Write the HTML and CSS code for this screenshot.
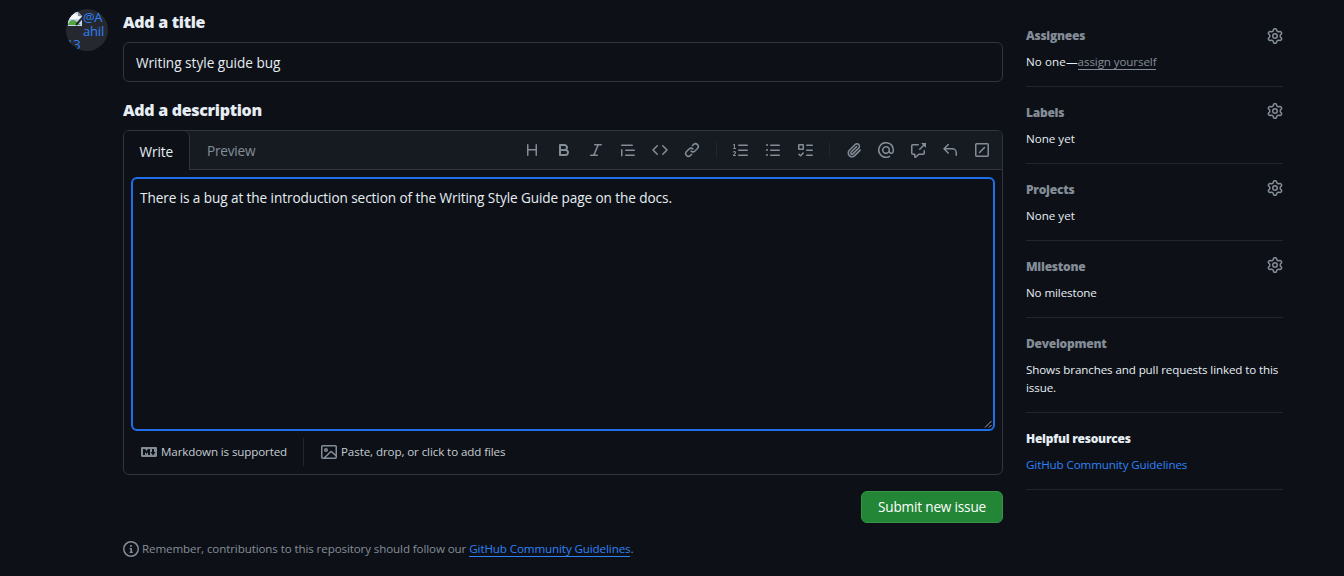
FILE: index.html
```html
<!DOCTYPE html>
<html lang="en">
<head>
<meta charset="utf-8">
<title>New issue</title>
<link rel="stylesheet" href="styles.css">
</head>
<body>
<svg class="defs" width="0" height="0">
  <symbol id="gear" viewBox="0 0 16 16"><path d="M8 0a8.2 8.2 0 0 1 .701.031C9.444.095 9.99.645 10.16 1.29l.288 1.107c.018.066.079.158.212.224.231.114.454.243.668.386.123.082.233.09.299.071l1.103-.303c.644-.176 1.392.021 1.82.63.27.385.506.792.704 1.218.315.675.111 1.422-.364 1.891l-.814.806c-.049.048-.098.147-.088.294.016.257.016.515 0 .772-.01.147.038.246.088.294l.814.806c.475.469.679 1.216.364 1.891a7.977 7.977 0 0 1-.704 1.217c-.428.61-1.176.807-1.82.63l-1.102-.302c-.067-.019-.177-.011-.3.071a5.909 5.909 0 0 1-.668.386c-.133.066-.194.158-.211.224l-.29 1.106c-.168.646-.715 1.196-1.458 1.26a8.006 8.006 0 0 1-1.402 0c-.743-.064-1.289-.614-1.458-1.26l-.289-1.106c-.018-.066-.079-.158-.212-.224a5.738 5.738 0 0 1-.668-.386c-.123-.082-.233-.09-.299-.071l-1.103.303c-.644.176-1.392-.021-1.82-.63a8.12 8.12 0 0 1-.704-1.218c-.315-.675-.111-1.422.363-1.891l.815-.806c.05-.048.098-.147.088-.294a6.214 6.214 0 0 1 0-.772c.01-.147-.038-.246-.088-.294l-.815-.806C.635 6.045.431 5.298.746 4.623a7.92 7.92 0 0 1 .704-1.217c.428-.61 1.176-.807 1.82-.63l1.102.302c.067.019.177.011.3-.071.214-.143.437-.272.668-.386.133-.066.194-.158.211-.224l.29-1.106C6.009.645 6.556.095 7.299.03 7.53.01 7.764 0 8 0Zm-.571 1.525c-.036.003-.108.036-.137.146l-.289 1.105c-.147.561-.549.967-.998 1.189-.173.086-.34.183-.5.29-.417.278-.97.423-1.529.27l-1.103-.303c-.109-.03-.175.016-.195.045-.22.312-.412.644-.573.99-.014.031-.021.11.059.19l.815.806c.411.406.562.957.53 1.456a4.709 4.709 0 0 0 0 .582c.032.499-.119 1.05-.53 1.456l-.815.806c-.081.08-.073.159-.059.19.162.346.353.677.573.989.02.03.085.076.195.046l1.102-.303c.56-.153 1.113-.008 1.53.27.161.107.328.204.501.29.447.222.85.629.997 1.189l.289 1.105c.029.109.101.143.137.146a6.6 6.6 0 0 0 1.142 0c.036-.003.108-.036.137-.146l.289-1.105c.147-.561.549-.967.998-1.189.173-.086.34-.183.5-.29.417-.278.97-.423 1.529-.27l1.103.303c.109.029.175-.016.195-.045.22-.313.411-.644.573-.99.014-.031.021-.11-.059-.19l-.815-.806c-.411-.406-.562-.957-.53-1.456a4.709 4.709 0 0 0 0-.582c-.032-.499.119-1.05.53-1.456l.815-.806c.081-.08.073-.159.059-.19a6.464 6.464 0 0 0-.573-.989c-.02-.03-.085-.076-.195-.046l-1.102.303c-.56.153-1.113.008-1.53-.27a4.44 4.44 0 0 0-.501-.29c-.447-.222-.85-.629-.997-1.189l-.289-1.105c-.029-.11-.101-.143-.137-.146a6.6 6.6 0 0 0-1.142 0ZM11 8a3 3 0 1 1-6 0 3 3 0 0 1 6 0ZM9.5 8a1.5 1.5 0 1 0-3.001.001A1.5 1.5 0 0 0 9.5 8Z"/></symbol>
</svg>
<div class="page">
  <div class="avatar">
    <svg class="broken" width="16" height="16" viewBox="0 0 16 16"><path fill="#c5d5f5" d="M1 1h10l4 4v10H1z"/><path fill="#f4f6fa" d="M2 7c0-3 2-3 3-3 1-2 5-2 6 1l3 1v2H2z"/><path fill="#52a83c" d="M1 14c1-5 5-6 8-4l5 4z"/><path fill="#8b9096" d="M11 1v4h4z"/><path stroke="#25292f" stroke-width="2" d="m16 6-7 8"/></svg><span class="alt">@A</span><span class="alt alt2">ahil</span><span class="alt alt3">13</span>
  </div>

  <main class="main">
    <h3 class="heading h-title">Add a title</h3>
    <div class="title-input"><span class="t-title">Writing style guide bug</span></div>
    <h3 class="heading heading-desc">Add a description</h3>

    <section class="editor">
      <header class="editor-head">
        <div class="tab tab-active"><span>Write</span></div>
        <div class="tab tab-preview"><span>Preview</span></div>
        <div class="tools">
          <svg class="icon" viewBox="0 0 16 16"><path d="M3.75 2a.75.75 0 0 1 .75.75V7h7V2.75a.75.75 0 0 1 1.5 0v10.5a.75.75 0 0 1-1.5 0V8.5h-7v4.75a.75.75 0 0 1-1.5 0V2.75A.75.75 0 0 1 3.75 2Z"/></svg>
          <svg class="icon" viewBox="0 0 16 16"><path d="M4 2h4.5a3.501 3.501 0 0 1 2.852 5.53A3.499 3.499 0 0 1 9.5 14H4a1 1 0 0 1-1-1V3a1 1 0 0 1 1-1Zm1 7v3h4.5a1.5 1.5 0 0 0 0-3Zm3.5-2a1.5 1.5 0 0 0 0-3H5v3Z"/></svg>
          <svg class="icon" viewBox="0 0 16 16"><path d="M6 2.75A.75.75 0 0 1 6.75 2h6.5a.75.75 0 0 1 0 1.5h-2.505l-3.858 9H9.25a.75.75 0 0 1 0 1.5h-6.5a.75.75 0 0 1 0-1.5h2.505l3.858-9H6.75A.75.75 0 0 1 6 2.75Z"/></svg>
          <svg class="icon" viewBox="0 0 16 16"><path d="M1.75 2.5h10.5a.75.75 0 0 1 0 1.5H1.75a.75.75 0 0 1 0-1.5Zm4 5h8.5a.75.75 0 0 1 0 1.5h-8.5a.75.75 0 0 1 0-1.5Zm0 5h8.5a.75.75 0 0 1 0 1.5h-8.5a.75.75 0 0 1 0-1.5ZM2.5 7.75v6a.75.75 0 0 1-1.5 0v-6a.75.75 0 0 1 1.5 0Z"/></svg>
          <svg class="icon" viewBox="0 0 16 16"><path d="m11.28 3.22 4.25 4.25a.75.75 0 0 1 0 1.06l-4.25 4.25a.749.749 0 0 1-1.275-.326.749.749 0 0 1 .215-.734L13.94 8l-3.72-3.72a.749.749 0 0 1 .326-1.275.749.749 0 0 1 .734.215Zm-6.56 0a.751.751 0 0 1 1.042.018.751.751 0 0 1 .018 1.042L2.06 8l3.72 3.72a.749.749 0 0 1-.326 1.275.749.749 0 0 1-.734-.215L.47 8.53a.75.75 0 0 1 0-1.06Z"/></svg>
          <svg class="icon" viewBox="0 0 16 16"><path d="m7.775 3.275 1.25-1.25a3.5 3.5 0 1 1 4.95 4.95l-2.5 2.5a3.5 3.5 0 0 1-4.95 0 .751.751 0 0 1 .018-1.042.751.751 0 0 1 1.042-.018 1.998 1.998 0 0 0 2.83 0l2.5-2.5a2.002 2.002 0 0 0-2.83-2.83l-1.25 1.25a.751.751 0 0 1-1.042-.018.751.751 0 0 1-.018-1.042Zm-4.69 9.64a1.998 1.998 0 0 0 2.83 0l1.25-1.25a.751.751 0 0 1 1.042.018.751.751 0 0 1 .018 1.042l-1.25 1.25a3.5 3.5 0 1 1-4.95-4.95l2.5-2.5a3.5 3.5 0 0 1 4.95 0 .751.751 0 0 1-.018 1.042.751.751 0 0 1-1.042.018 1.998 1.998 0 0 0-2.83 0l-2.5 2.5a1.998 1.998 0 0 0 0 2.83Z"/></svg>
          <i class="tool-sep"></i>
          <svg class="icon" viewBox="0 0 16 16"><path d="M5 3.25a.75.75 0 0 1 .75-.75h8.5a.75.75 0 0 1 0 1.5h-8.5A.75.75 0 0 1 5 3.25Zm0 5a.75.75 0 0 1 .75-.75h8.5a.75.75 0 0 1 0 1.5h-8.5A.75.75 0 0 1 5 8.25Zm0 5a.75.75 0 0 1 .75-.75h8.5a.75.75 0 0 1 0 1.5h-8.5a.75.75 0 0 1-.75-.75ZM.924 10.32a.5.5 0 0 1-.851-.525l.001-.001.001-.002.002-.004.007-.011c.097-.144.215-.273.348-.384.228-.19.588-.392 1.068-.392.468 0 .858.181 1.126.484.259.294.377.673.377 1.038 0 .987-.686 1.495-1.156 1.845l-.047.035c-.303.225-.522.4-.654.597h1.357a.5.5 0 0 1 0 1H.5a.5.5 0 0 1-.5-.5c0-1.005.692-1.52 1.167-1.875l.035-.025c.531-.396.8-.625.8-1.078a.57.57 0 0 0-.128-.376C1.806 10.068 1.695 10 1.5 10a.658.658 0 0 0-.429.163.835.835 0 0 0-.144.153ZM2.003 2.5V6h.503a.5.5 0 0 1 0 1H.5a.5.5 0 0 1 0-1h.503V3.308l-.28.14a.5.5 0 0 1-.446-.895l1.003-.5a.5.5 0 0 1 .723.447Z"/></svg>
          <svg class="icon" viewBox="0 0 16 16"><path d="M5.75 2.5h8.5a.75.75 0 0 1 0 1.5h-8.5a.75.75 0 0 1 0-1.5Zm0 5h8.5a.75.75 0 0 1 0 1.5h-8.5a.75.75 0 0 1 0-1.5Zm0 5h8.5a.75.75 0 0 1 0 1.5h-8.5a.75.75 0 0 1 0-1.5ZM2 14a1 1 0 1 1 0-2 1 1 0 0 1 0 2Zm1-6a1 1 0 1 1-2 0 1 1 0 0 1 2 0ZM2 4a1 1 0 1 1 0-2 1 1 0 0 1 0 2Z"/></svg>
          <svg class="icon" viewBox="0 0 16 16"><path d="M2 2h4a1 1 0 0 1 1 1v4a1 1 0 0 1-1 1H2a1 1 0 0 1-1-1V3a1 1 0 0 1 1-1Zm4.655 8.595a.75.75 0 0 1 0 1.06L4.03 14.28a.75.75 0 0 1-1.06 0l-1.5-1.5a.749.749 0 0 1 .326-1.275.749.749 0 0 1 .734.215l.97.97 2.095-2.095a.75.75 0 0 1 1.06 0ZM9.75 2.5h5.5a.75.75 0 0 1 0 1.5h-5.5a.75.75 0 0 1 0-1.5Zm0 5h5.5a.75.75 0 0 1 0 1.5h-5.5a.75.75 0 0 1 0-1.5Zm0 5h5.5a.75.75 0 0 1 0 1.5h-5.5a.75.75 0 0 1 0-1.5Zm-7.25-9v3h3v-3Z"/></svg>
          <i class="tool-sep"></i>
          <svg class="icon" viewBox="0 0 16 16"><path d="M12.212 3.02a1.753 1.753 0 0 0-2.478.003l-5.83 5.83a3.007 3.007 0 0 0-.88 2.127c0 .795.315 1.551.88 2.116.567.567 1.333.89 2.126.89.79 0 1.548-.321 2.116-.89l5.48-5.48a.75.75 0 0 1 1.061 1.06l-5.48 5.48a4.492 4.492 0 0 1-3.177 1.33c-1.2 0-2.345-.487-3.187-1.33a4.483 4.483 0 0 1-1.32-3.177c0-1.195.475-2.341 1.32-3.186l5.83-5.83a3.25 3.25 0 0 1 5.553 2.297c0 .863-.343 1.691-.953 2.301L7.439 12.39c-.375.377-.884.59-1.416.593a1.998 1.998 0 0 1-1.412-.593 1.992 1.992 0 0 1 0-2.828l5.48-5.48a.751.751 0 0 1 1.042.018.751.751 0 0 1 .018 1.042l-5.48 5.48a.492.492 0 0 0 0 .707.499.499 0 0 0 .352.154.51.51 0 0 0 .356-.154l5.833-5.827a1.755 1.755 0 0 0 0-2.481Z"/></svg>
          <svg class="icon" viewBox="0 0 16 16"><path d="M4.75 2.37a6.501 6.501 0 0 0 6.5 11.26.75.75 0 0 1 .75 1.298A7.999 7.999 0 0 1 .989 4.148 8 8 0 0 1 16 7.75v1.5a2.75 2.75 0 0 1-5.072 1.475 3.999 3.999 0 0 1-6.65-4.19A4 4 0 0 1 12 8v1.25a1.25 1.25 0 0 0 2.5 0V7.867a6.5 6.5 0 0 0-9.75-5.496ZM10.5 8a2.5 2.5 0 1 0-5 0 2.5 2.5 0 0 0 5 0Z"/></svg>
          <svg class="icon" viewBox="0 0 16 16"><path d="M2.75 3.5a.25.25 0 0 0-.25.25v7.5c0 .138.112.25.25.25h2a.75.75 0 0 1 .75.75v2.19l2.72-2.72a.749.749 0 0 1 .53-.22h4.5a.25.25 0 0 0 .25-.25v-2.5a.75.75 0 0 1 1.5 0v2.5A1.75 1.75 0 0 1 13.25 13H9.06l-2.573 2.573A1.458 1.458 0 0 1 4 14.543V13H2.75A1.75 1.75 0 0 1 1 11.25v-7.5C1 2.784 1.784 2 2.75 2h5.5a.75.75 0 0 1 0 1.5ZM16 1.25v4.146a.25.25 0 0 1-.427.177L14.03 4.03l-3.75 3.75a.749.749 0 0 1-1.275-.326.749.749 0 0 1 .215-.734l3.75-3.75-1.543-1.543A.25.25 0 0 1 11.604 1h4.146a.25.25 0 0 1 .25.25Z"/></svg>
          <svg class="icon" viewBox="0 0 16 16"><path d="M6.78 1.97a.75.75 0 0 1 0 1.06L3.81 6h6.44A4.75 4.75 0 0 1 15 10.75v2.5a.75.75 0 0 1-1.5 0v-2.5a3.25 3.25 0 0 0-3.25-3.25H3.81l2.97 2.97a.749.749 0 0 1-.326 1.275.749.749 0 0 1-.734-.215L1.47 7.28a.75.75 0 0 1 0-1.06l4.25-4.25a.75.75 0 0 1 1.06 0Z"/></svg>
          <svg class="icon" viewBox="0 0 16 16"><path d="M2.75 1h10.5c.966 0 1.75.784 1.75 1.75v10.5A1.75 1.75 0 0 1 13.25 15H2.75A1.75 1.75 0 0 1 1 13.25V2.75C1 1.784 1.784 1 2.75 1Zm-.25 1.75v10.5c0 .138.112.25.25.25h10.5a.25.25 0 0 0 .25-.25V2.75a.25.25 0 0 0-.25-.25H2.75a.25.25 0 0 0-.25.25Zm8.53 3.28-5 5a.75.75 0 0 1-1.06-1.06l5-5a.75.75 0 0 1 1.06 1.06Z"/></svg>
        </div>
      </header>
      <div class="textarea">
        <span class="t-body">There is a bug at the introduction section of the Writing Style Guide page on the docs.</span>
        <svg class="grip" width="9" height="9" viewBox="0 0 9 9"><path d="M1 7.5l6.500-6.500M5 7.500l2.500-2.500" fill="none" stroke="#c9cdd1" stroke-width=".8"/></svg>
      </div>
      <footer class="editor-foot">
        <div class="foot-item">
          <svg class="icon" viewBox="0 0 16 16"><path d="M14.85 3c.63 0 1.15.52 1.14 1.15v7.7c0 .63-.51 1.15-1.15 1.15H1.15C.52 13 0 12.48 0 11.84V4.15C0 3.52.52 3 1.15 3ZM9 11V5H7L5.5 7 4 5H2v6h2V8l1.5 1.92L7 8v3Zm2.99.5L14.5 8H13V5h-2v3H9.5Z"/></svg>
          <span class="t-md">Markdown is supported</span>
        </div>
        <i class="foot-sep"></i>
        <div class="foot-item">
          <svg class="icon" viewBox="0 0 16 16"><path d="M16 13.25A1.75 1.75 0 0 1 14.25 15H1.75A1.75 1.75 0 0 1 0 13.25V2.75C0 1.784.784 1 1.75 1h12.5c.966 0 1.75.784 1.75 1.75ZM1.75 2.5a.25.25 0 0 0-.25.25v10.5c0 .138.112.25.25.25h.94l.03-.03 6.077-6.078a1.75 1.75 0 0 1 2.412-.06L14.5 10.31V2.75a.25.25 0 0 0-.25-.25Zm12.5 11a.25.25 0 0 0 .25-.25v-.917l-4.298-3.889a.25.25 0 0 0-.344.009L4.81 13.5ZM7 6a2 2 0 1 1-3.999.001A2 2 0 0 1 7 6ZM5.5 6a.5.5 0 1 0-1 0 .5.5 0 0 0 1 0Z"/></svg>
          <span class="t-paste">Paste, drop, or click to add files</span>
        </div>
      </footer>
    </section>

    <div class="actions"><button class="submit"><span>Submit new issue</span></button></div>

    <div class="note">
      <svg class="icon" viewBox="0 0 16 16"><path d="M0 8a8 8 0 1 1 16 0A8 8 0 0 1 0 8Zm8-6.5a6.5 6.5 0 1 0 0 13 6.5 6.5 0 0 0 0-13ZM6.5 7.75A.75.75 0 0 1 7.25 7h1a.75.75 0 0 1 .75.75v2.75h.25a.75.75 0 0 1 0 1.5h-2a.75.75 0 0 1 0-1.5h.25v-2h-.25a.75.75 0 0 1-.75-.75ZM8 6a1 1 0 1 1 0-2 1 1 0 0 1 0 2Z"/></svg>
      <span class="t-note">Remember, contributions to this repository should follow our</span>
      <a class="note-link">GitHub Community Guidelines</a><span class="dot">.</span>
    </div>
  </main>

  <aside class="side">
    <section class="block first"><h4 class="t-assignees">Assignees</h4><svg class="icon gear"><use href="#gear"/></svg><p><span class="t-noone">No one—</span><a class="assign">assign yourself</a></p></section>
    <section class="block"><h4 class="t-labels">Labels</h4><svg class="icon gear"><use href="#gear"/></svg><p class="t-none">None yet</p></section>
    <section class="block"><h4 class="t-projects">Projects</h4><svg class="icon gear"><use href="#gear"/></svg><p class="t-none">None yet</p></section>
    <section class="block"><h4 class="t-milestone">Milestone</h4><svg class="icon gear"><use href="#gear"/></svg><p class="t-nomile">No milestone</p></section>
    <section class="block"><h4 class="t-dev">Development</h4><p class="t-shows">Shows branches and pull requests linked to this<br>issue.</p></section>
    <section class="block"><h4 class="t-help">Helpful resources</h4><p><a class="side-link">GitHub Community Guidelines</a></p></section>
  </aside>
</div>
</body>
</html>
```
FILE: styles.css
```css
* { box-sizing: border-box; }
body {
  margin: 0;
  height: 576px;
  overflow: hidden;
  background: #0d1117;
  color: #e6edf3;
  font: 13.6px/20px "Open Sans", "Noto Sans", sans-serif;
}
h3, h4, p { margin: 0; }
.defs { position: absolute; }
.page { display: flex; padding-left: 66px; }
.icon { display: block; flex: none; width: 16px; height: 16px; fill: #848d97; }

.avatar {
  position: relative;
  width: 42px;
  height: 42px;
  margin: 9px 15px 0 0;
  border-radius: 50%;
  overflow: hidden;
  background: #25292f;
  color: #2f81f7;
  font-size: 13px;
  line-height: 13px;
}
.broken { position: absolute; left: 1px; top: 2px; }
.alt { position: absolute; left: 17px; top: 2px; letter-spacing: -.3px; }
.alt2 { top: 16px; letter-spacing: -.2px; }
.alt3 { left: 0; top: 29px; }

.main { width: 880px; margin-right: 23px; }
.heading { margin-top: 12px; font-size: 16px; line-height: 20px; font-weight: 800; letter-spacing: -.3px; }
.title-input {
  display: flex;
  align-items: center;
  height: 40px;
  margin-top: 10px;
  padding: 2px 12px 0;
  border: 1px solid #30363d;
  border-radius: 6px;
}
.heading-desc { margin-top: 18px; }

.editor { height: 345px; margin-top: 10px; border: 1px solid #30363d; border-radius: 6px; overflow: hidden; }
.editor-head { display: flex; height: 39px; background: #161b22; border-bottom: 1px solid #30363d; }
.tab { display: flex; align-items: center; padding-top: 2px; letter-spacing: -.1px; }
.tab-active {
  width: 66px;
  height: 39px;
  padding-left: 15.5px;
  background: #0d1117;
  border-right: 1px solid #30363d;
  border-radius: 0 6px 0 0;
}
.tab-preview { padding-left: 17px; color: #848d97; letter-spacing: -.2px; }
.tools { display: flex; gap: 16px; align-items: center; margin-left: auto; padding-right: 12px; }
.tool-sep { width: 1px; height: 16px; background: #21262d; }
.textarea {
  position: relative;
  height: 254px;
  margin: 7px 7px 0;
  padding: 9px 7px;
  border: 2px solid #1f6feb;
  border-radius: 6px;
}
.t-body { letter-spacing: -.09px; }
.grip { position: absolute; right: 0; bottom: 0; }
.editor-foot { display: flex; align-items: center; height: 42px; padding-left: 17px; font-size: 11.6px; color: #c5ccd3; }
.foot-item { display: flex; align-items: center; gap: 4px; }
.t-md { width: 126px; white-space: nowrap; letter-spacing: -.12px; }
.t-paste { letter-spacing: -.1px; }
.foot-sep { width: 1px; height: 28px; margin: 0 17px 0 16px; background: #21262d; }

.actions { display: flex; justify-content: flex-end; margin-top: 16px; }
.submit {
  width: 142px;
  height: 32px;
  padding: 0;
  border: 1px solid #359446;
  border-radius: 6px;
  background: #238636;
  color: #fff;
  font: 400 13.6px/20px "Open Sans", "Noto Sans", sans-serif;
  letter-spacing: -.18px;
}
.note { display: flex; align-items: center; margin-top: 15px; font-size: 11.6px; color: #848d97; white-space: nowrap; }
.t-note { margin: 1px 3px 0; letter-spacing: -.11px; }
.note-link { margin-top: 1px; color: #2f81f7; border-bottom: 1px solid #2f81f7; line-height: 15px; letter-spacing: -.11px; }

.side { width: 257px; padding-top: 10px; font-size: 11.6px; line-height: 18px; }
.block {
  display: grid;
  grid-template-columns: 1fr 16px;
  row-gap: 8px;
  padding: 17px 0 15px;
  border-bottom: 1px solid #21262d;
}
.block h4 { font-size: 12px; line-height: 18px; font-weight: 800; letter-spacing: -.25px; color: #848d97; }
.block p { grid-column: 1 / -1; white-space: nowrap; letter-spacing: -.11px; }
.block .t-none { letter-spacing: 0; }
.block .t-help { color: #e6edf3; }
.t-noone { letter-spacing: .1px; }
.gear { margin-top: -1px; }
.first .gear { margin-top: 1px; }
.assign { display: inline-block; line-height: 15px; color: #848d97; border-bottom: 1px solid #848d97; letter-spacing: -.1px; }
.first p { height: 18px; }
.side-link { color: #2f81f7; }
```
